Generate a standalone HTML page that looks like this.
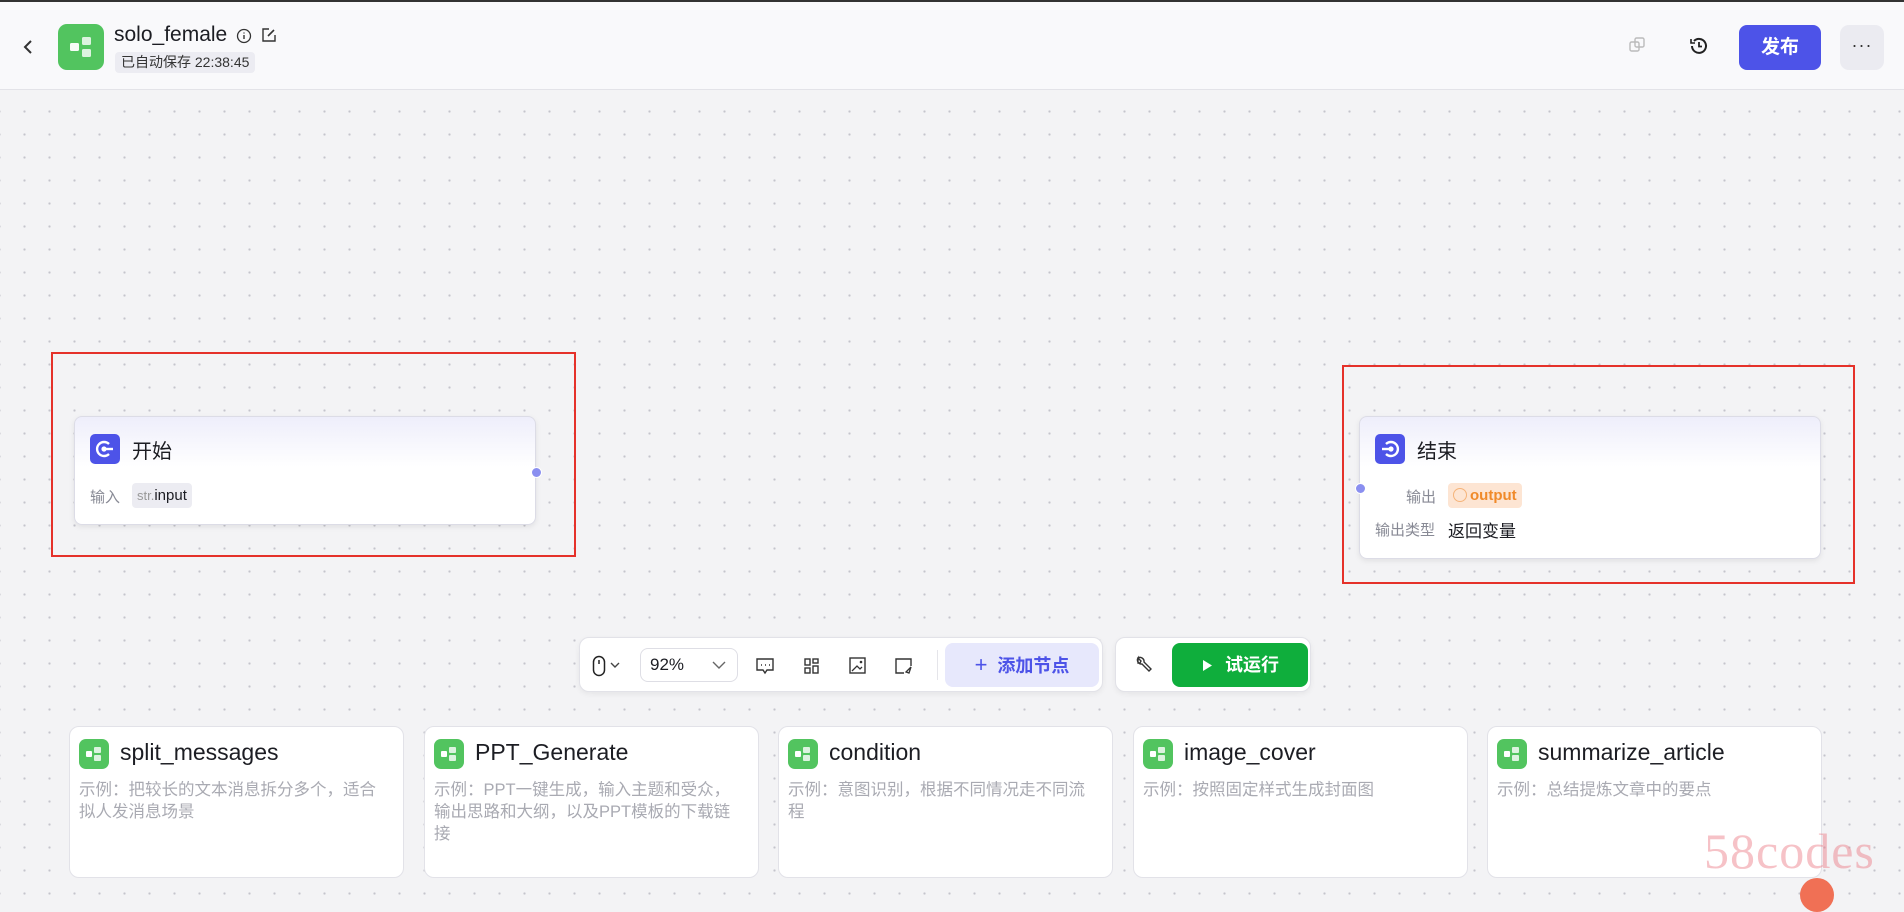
<!DOCTYPE html>
<html><head><meta charset="utf-8">
<style>
*{box-sizing:border-box;margin:0;padding:0}
body{width:1904px;height:884px;overflow:hidden;position:relative;font-family:"Liberation Sans","Noto Sans CJK SC",sans-serif;background-color:#f3f3f5;background-image:radial-gradient(circle,#c4c4cc 1px,transparent 1.3px);background-size:25px 23px;background-position:12px 8px;color:#1c1d23}
.hdr{position:absolute;left:0;top:0;width:1904px;height:90px;background:#f9f9fb;border-bottom:1px solid #e3e3e8;border-top:2px solid #333}
.abs{position:absolute}
.gicon{background:#52c45f;border-radius:8px;display:flex;align-items:center;justify-content:center}
.node{position:absolute;background:linear-gradient(#eeeefb 0,#fff 50px);border:1px solid #dcdce6;border-radius:8px;box-shadow:0 2px 6px rgba(0,0,0,.08)}
.nicon{position:absolute;width:30px;height:30px;background:#4d53e8;border-radius:5px}
.red{position:absolute;border:2px solid #e5312a}
.lbl{color:#888a95;font-size:15px}
.card{position:absolute;top:726px;width:335px;height:152px;background:#fff;border:1px solid #e2e2e8;border-radius:10px}
.card .gicon{position:absolute;left:9px;top:12px;width:30px;height:30px;border-radius:7px}
.card .t{position:absolute;left:50px;top:12px;font-size:23px;color:#1c1d23;white-space:nowrap}
.card .d{position:absolute;left:9px;top:52px;right:24px;font-size:16.5px;line-height:22px;color:#a9aab2}
.tb{position:absolute;background:#fff;border:1px solid #e2e2e8;border-radius:10px;box-shadow:0 2px 6px rgba(0,0,0,.06)}
</style></head><body>
<div class="hdr">
  <svg class="abs" style="left:22px;top:36px" width="14" height="18" viewBox="0 0 14 18"><path d="M9 3 L3 9 L9 15" fill="none" stroke="#333" stroke-width="2"/></svg>
  <div class="abs gicon" style="left:58px;top:22px;width:46px;height:46px;border-radius:9px">
    <svg width="26" height="24" viewBox="0 0 26 24"><rect x="2" y="8" width="9" height="8" rx="1.5" fill="#fff" opacity=".95"/><rect x="14" y="2" width="9" height="8" rx="1.5" fill="#fff" opacity=".8"/><rect x="14" y="14" width="9" height="8" rx="1.5" fill="#fff" opacity=".8"/></svg>
  </div>
  <div class="abs" style="left:114px;top:21px;font-size:21px;font-weight:500">solo_female</div>
  <svg class="abs" style="left:236px;top:26px" width="16" height="16" viewBox="0 0 16 16"><circle cx="8" cy="8" r="6.5" fill="none" stroke="#333" stroke-width="1.3"/><path d="M8 7v4M8 4.5v1" stroke="#333" stroke-width="1.4"/></svg>
  <svg class="abs" style="left:261px;top:25px" width="16" height="16" viewBox="0 0 16 16"><path d="M8 2H2v12h12V8" fill="none" stroke="#333" stroke-width="1.4"/><path d="M7 9l6-6" stroke="#333" stroke-width="1.6"/></svg>
  <div class="abs" style="left:115px;top:50px;height:21px;padding:0 6px;background:#ececf2;border-radius:4px;font-size:14px;line-height:21px;color:#333">已自动保存 22:38:45</div>

  <svg class="abs" style="left:1628px;top:34px" width="18" height="18" viewBox="0 0 18 18"><rect x="2" y="6" width="9" height="9" rx="1.5" fill="none" stroke="#bbb" stroke-width="1.4"/><rect x="7" y="2" width="9" height="9" rx="1.5" fill="none" stroke="#bbb" stroke-width="1.4"/></svg>
  <svg class="abs" style="left:1688px;top:33px" width="22" height="22" viewBox="0 0 22 22"><path d="M4 11a7 7 0 1 0 2-5" fill="none" stroke="#222" stroke-width="2"/><path d="M3 4v4h4" fill="none" stroke="#222" stroke-width="1.6"/><path d="M11 7v4.5h3" fill="none" stroke="#222" stroke-width="1.8"/></svg>
  <div class="abs" style="left:1739px;top:23px;width:82px;height:45px;background:#4d53e8;border-radius:8px;color:#fff;font-size:19px;font-weight:700;text-align:center;line-height:45px">发布</div>
  <div class="abs" style="left:1840px;top:23px;width:44px;height:45px;background:#ebebf1;border-radius:9px;text-align:center;line-height:40px;font-size:18px;letter-spacing:1px;color:#333">···</div>
</div>

<div class="red" style="left:51px;top:352px;width:525px;height:205px"></div>
<div class="node" style="left:74px;top:416px;width:462px;height:109px">
  <div class="nicon" style="left:15px;top:17px"><svg width="30" height="30" viewBox="0 0 30 30"><path d="M19 10a7 7 0 1 0 0 10" fill="none" stroke="#fff" stroke-width="2.4"/><circle cx="14" cy="15" r="2.6" fill="#fff"/><path d="M14 15h9" stroke="#fff" stroke-width="2.4"/></svg></div>
  <div class="abs" style="left:57px;top:18px;font-size:20px">开始</div>
  <div class="abs lbl" style="left:15px;top:69px">输入</div>
  <div class="abs" style="left:57px;top:66px;height:25px;padding:0 5px;background:#ececf2;border-radius:4px;line-height:25px;font-size:15px"><span style="color:#999;font-size:13px">str.</span>input</div>
  <div class="abs" style="left:456px;top:50px;width:11px;height:11px;border-radius:50%;background:#8a8ff0;border:1px solid #fff"></div>
</div>

<div class="red" style="left:1342px;top:365px;width:513px;height:219px"></div>
<div class="node" style="left:1359px;top:416px;width:462px;height:143px">
  <div class="nicon" style="left:15px;top:17px"><svg width="30" height="30" viewBox="0 0 30 30"><path d="M11 10a7 7 0 1 1 0 10" fill="none" stroke="#fff" stroke-width="2.4"/><circle cx="16" cy="15" r="2.6" fill="#fff"/><path d="M7 15h9" stroke="#fff" stroke-width="2.4"/></svg></div>
  <div class="abs" style="left:57px;top:18px;font-size:20px">结束</div>
  <div class="abs lbl" style="left:46px;top:69px">输出</div>
  <div class="abs" style="left:88px;top:66px;height:25px;padding:0 5px;background:#fde5d3;border-radius:4px;line-height:25px;font-size:15px;color:#f08a2a;font-weight:700"><span style="display:inline-block;width:14px;height:14px;border:1px solid #f5b47a;border-radius:50%;vertical-align:-2px;margin-right:3px"></span>output</div>
  <div class="abs lbl" style="left:15px;top:102px">输出类型</div>
  <div class="abs" style="left:88px;top:100px;font-size:17px">返回变量</div>
  <div class="abs" style="left:-5px;top:66px;width:11px;height:11px;border-radius:50%;background:#8a8ff0;border:1px solid #fff"></div>
</div>

<div class="tb" style="left:579px;top:637px;width:524px;height:55px">
  <svg class="abs" style="left:12px;top:17px" width="14" height="22" viewBox="0 0 14 22"><rect x="1.5" y="1.5" width="11" height="19" rx="5.5" fill="none" stroke="#222" stroke-width="1.5"/><path d="M7 5v4" stroke="#222" stroke-width="1.5"/></svg>
  <svg class="abs" style="left:30px;top:23px" width="10" height="8" viewBox="0 0 10 8"><path d="M1 2l4 4 4-4" fill="none" stroke="#444" stroke-width="1.4"/></svg>
  <div class="abs" style="left:60px;top:10px;width:98px;height:34px;border:1px solid #dedee5;border-radius:8px;font-size:17px;line-height:32px;padding-left:9px">92%
    <svg class="abs" style="left:70px;top:11px" width="16" height="10" viewBox="0 0 16 10"><path d="M2 2l6 6 6-6" fill="none" stroke="#666" stroke-width="1.4"/></svg></div>
  <svg class="abs" style="left:175px;top:18px" width="20" height="20" viewBox="0 0 20 20"><path d="M2 3h16v11h-6l-2 3-2-3H2z" fill="none" stroke="#333" stroke-width="1.4"/><path d="M6 9h1M10 9h1M14 9h1" stroke="#333" stroke-width="1.6"/></svg>
  <svg class="abs" style="left:222px;top:18px" width="20" height="20" viewBox="0 0 20 20"><rect x="3" y="3" width="5" height="6" fill="none" stroke="#333" stroke-width="1.4"/><rect x="11" y="3" width="5" height="4" fill="none" stroke="#333" stroke-width="1.4"/><rect x="3" y="12" width="5" height="5" fill="none" stroke="#333" stroke-width="1.4"/><rect x="11" y="10" width="5" height="7" fill="none" stroke="#333" stroke-width="1.4"/></svg>
  <svg class="abs" style="left:268px;top:18px" width="20" height="20" viewBox="0 0 20 20"><rect x="2" y="2" width="15" height="15" fill="none" stroke="#333" stroke-width="1.4"/><path d="M4 15l5-5 3 3 2-2" fill="none" stroke="#333" stroke-width="1.3"/><circle cx="13" cy="6" r="1.3" fill="#333"/></svg>
  <svg class="abs" style="left:314px;top:18px" width="20" height="20" viewBox="0 0 20 20"><path d="M10 17H2V3h15v7" fill="none" stroke="#333" stroke-width="1.4"/><path d="M12 16l5-5-2 6z" fill="none" stroke="#333" stroke-width="1.3"/></svg>
  <div class="abs" style="left:357px;top:12px;width:1px;height:30px;background:#e5e5ea"></div>
  <div class="abs" style="left:365px;top:5px;width:154px;height:44px;background:#e7e8fc;border-radius:8px;color:#4d53e8;font-size:18px;font-weight:700;line-height:44px;text-align:center"><span style="font-weight:400;font-size:22px;margin-right:10px">+</span>添加节点</div>
</div>
<div class="tb" style="left:1115px;top:637px;width:196px;height:55px">
  <svg class="abs" style="left:18px;top:17px" width="20" height="20" viewBox="0 0 20 20"><path d="M4 3a4 4 0 0 0 4 6l7 7 2-2-7-7a4 4 0 0 0-6-4l3 3-1 2-2 0z" fill="none" stroke="#333" stroke-width="1.4"/></svg>
  <div class="abs" style="left:56px;top:5px;width:136px;height:44px;background:#0fae3c;border-radius:8px;color:#fff;font-size:18px;font-weight:700;line-height:44px;text-align:center"><svg width="12" height="13" viewBox="0 0 12 13" style="margin-right:12px;vertical-align:-1px"><path d="M2 1l9 5.5L2 12z" fill="#fff"/></svg>试运行</div>
</div>

<div class="card" style="left:69px"><div class="gicon"><svg width="18" height="16" viewBox="0 0 18 16"><rect x="1" y="5" width="6" height="6" rx="1" fill="#fff"/><rect x="9" y="1" width="7" height="6" rx="1" fill="#fff" opacity=".8"/><rect x="9" y="9" width="7" height="6" rx="1" fill="#fff" opacity=".8"/></svg></div><div class="t">split_messages</div><div class="d">示例：把较长的文本消息拆分多个，适合拟人发消息场景</div></div>
<div class="card" style="left:424px"><div class="gicon"><svg width="18" height="16" viewBox="0 0 18 16"><rect x="1" y="5" width="6" height="6" rx="1" fill="#fff"/><rect x="9" y="1" width="7" height="6" rx="1" fill="#fff" opacity=".8"/><rect x="9" y="9" width="7" height="6" rx="1" fill="#fff" opacity=".8"/></svg></div><div class="t">PPT_Generate</div><div class="d">示例：PPT一键生成，输入主题和受众，输出思路和大纲，以及PPT模板的下载链接</div></div>
<div class="card" style="left:778px"><div class="gicon"><svg width="18" height="16" viewBox="0 0 18 16"><rect x="1" y="5" width="6" height="6" rx="1" fill="#fff"/><rect x="9" y="1" width="7" height="6" rx="1" fill="#fff" opacity=".8"/><rect x="9" y="9" width="7" height="6" rx="1" fill="#fff" opacity=".8"/></svg></div><div class="t">condition</div><div class="d">示例：意图识别，根据不同情况走不同流程</div></div>
<div class="card" style="left:1133px"><div class="gicon"><svg width="18" height="16" viewBox="0 0 18 16"><rect x="1" y="5" width="6" height="6" rx="1" fill="#fff"/><rect x="9" y="1" width="7" height="6" rx="1" fill="#fff" opacity=".8"/><rect x="9" y="9" width="7" height="6" rx="1" fill="#fff" opacity=".8"/></svg></div><div class="t">image_cover</div><div class="d">示例：按照固定样式生成封面图</div></div>
<div class="card" style="left:1487px"><div class="gicon"><svg width="18" height="16" viewBox="0 0 18 16"><rect x="1" y="5" width="6" height="6" rx="1" fill="#fff"/><rect x="9" y="1" width="7" height="6" rx="1" fill="#fff" opacity=".8"/><rect x="9" y="9" width="7" height="6" rx="1" fill="#fff" opacity=".8"/></svg></div><div class="t">summarize_article</div><div class="d">示例：总结提炼文章中的要点</div></div>

<div class="abs" style="left:1800px;top:878px;width:34px;height:34px;border-radius:50%;background:#f07055"></div>
<div class="abs" style="left:1704px;top:822px;font-family:'Liberation Serif',serif;font-size:50px;color:rgba(235,120,130,.45);letter-spacing:1px">58codes</div>
</body></html>
